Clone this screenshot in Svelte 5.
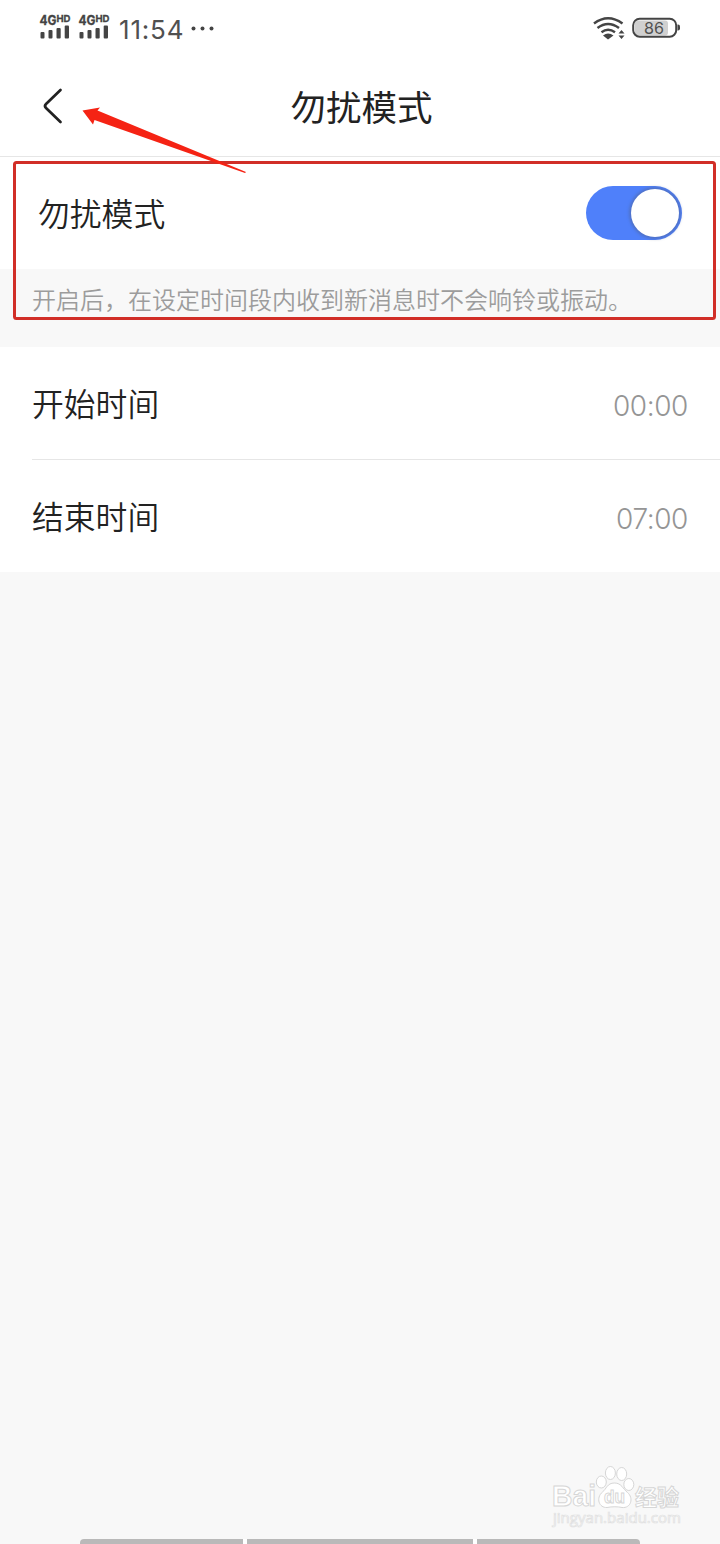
<script>
    let enabled = true;

    const signals = [1, 2];

    const times = [
        { label: '开始时间', value: '00:00' },
        { label: '结束时间', value: '07:00' }
    ];
</script>

<style>
    :global(body) {
        margin: 0;
        background: #f8f8f8;
    }

    .screen {
        position: relative;
        width: 720px;
        height: 1544px;
        overflow: hidden;
        background: #f8f8f8;
        color: #222;
        font-family: "Noto Sans CJK SC", sans-serif;
        font-weight: 350;
    }

    svg {
        display: block;
    }

    /* Status bar */
    .status {
        display: flex;
        justify-content: space-between;
        height: 56px;
        padding: 0 38px 0 39px;
        background: #fff;
    }

    .status-left, .status-right {
        display: flex;
    }

    .signal {
        margin-right: 7px;
    }

    .clock {
        margin-left: 2px;
        width: 64px;
        white-space: nowrap;
        font-family: Inter, sans-serif;
        font-size: 26px;
        font-weight: 400;
        line-height: 60px;
        letter-spacing: 0.8px;
        color: #505050;
    }

    .more {
        margin-left: 7px;
    }

    /* Title bar */
    .title-bar {
        display: grid;
        grid-template-columns: 100px 1fr 100px;
        align-items: center;
        height: 100px;
        background: #fff;
        border-bottom: 1px solid #e6e6e6;
    }

    .title-bar h1 {
        margin: 0 0 0 3px;
        font-size: 35.5px;
        font-weight: 400;
        line-height: 100px;
        text-align: center;
    }

    .back {
        padding: 0;
        border: none;
        background: none;
    }

    /* Settings rows */
    .row {
        display: flex;
        align-items: center;
        justify-content: space-between;
        box-sizing: border-box;
        height: 112px;
        padding: 0 32px;
        background: #fff;
        font-size: 31.8px;
    }

    .row.main {
        padding: 0 38px;
    }

    .label {
        padding-bottom: 2px;
    }

    .switch {
        display: flex;
        justify-content: flex-end;
        box-sizing: border-box;
        width: 96px;
        height: 54px;
        padding: 3px;
        border: none;
        border-radius: 27px;
        background: #4f80fa;
    }

    .switch.off {
        justify-content: flex-start;
        background: #ccc;
    }

    .knob {
        width: 48px;
        height: 48px;
        border-radius: 50%;
        background: #fff;
        box-shadow: 0 0 3px 2px rgba(80, 95, 135, 0.45);
    }

    .note {
        height: 78px;
        margin: 0;
        padding-left: 32px;
        font-size: 24px;
        line-height: 60px;
        color: #9c9c9c;
    }

    .times {
        background: #fff;
    }

    .time-row + .time-row {
        height: 113px;
        margin-left: 32px;
        padding-left: 0;
        border-top: 1px solid #e6e6e6;
    }

    .value {
        font-family: Inter, sans-serif;
        font-size: 28px;
        font-weight: 300;
        letter-spacing: -0.4px;
        color: #959595;
        padding-top: 5px;
    }

    /* Marks over the page */
    .marks, .watermark, .gestures {
        position: absolute;
    }

    .marks {
        left: 0;
        top: 0;
    }

    .watermark {
        left: 545px;
        top: 1460px;
    }

    .gestures {
        left: 80px;
        bottom: 0;
        display: grid;
        grid-template-columns: 163px 226px 163px;
        gap: 4px;
        background: #fff;
        border-radius: 4px 4px 0 0;
        overflow: hidden;
    }

    .gestures span {
        height: 5px;
        background: #b9b9b9;
    }
</style>

<div class="screen">
    <header class="status">
        <div class="status-left">
            {#each signals as signal (signal)}
                <svg class="signal" width="32" height="56" viewBox="0 0 32 56" fill="#444">
                    <g font-family="Inter, sans-serif" font-weight="700" stroke="#444" stroke-width="0.3">
                        <text x="0.5" y="24.5" font-size="13" textLength="17" lengthAdjust="spacingAndGlyphs">4G</text>
                        <text x="17.5" y="22" font-size="9.5" textLength="14" lengthAdjust="spacingAndGlyphs">HD</text>
                    </g>
                    <rect x="1.5" y="32" width="4" height="6.5" rx="1" />
                    <rect x="9.5" y="30" width="4" height="8.5" rx="1" />
                    <rect x="17.5" y="28" width="4.2" height="10.5" rx="1" />
                    <rect x="25.7" y="25.5" width="4.3" height="13" rx="1" />
                </svg>
            {/each}
            <div class="clock">11:54</div>
            <svg class="more" width="26" height="56" fill="#444">
                <circle cx="3.5" cy="28.5" r="2" />
                <circle cx="12.5" cy="28.5" r="2" />
                <circle cx="21.5" cy="28.5" r="2" />
            </svg>
        </div>
        <div class="status-right">
            <svg width="90" height="56" viewBox="592 0 90 56" fill="none" stroke="#444" stroke-width="2.5">
                <path d="M594 23.5Q608 13 622.5 23.5M597.5 28Q608 20 619 28M601.5 32.2Q608 27.5 615 32.2" />
                <path d="M603 35.5Q608 31.5 613.5 35.5L608 39.5Z" fill="#444" stroke="none" />
                <path d="M618.5 33.5L621.5 30L624.5 33.5ZM618.5 35.5L621.5 39L624.5 35.5Z" fill="#444" stroke="none" />
                <rect x="635" y="20.5" width="33" height="15" rx="3" fill="#d0d0d0" stroke="none" />
                <rect x="633.2" y="18.7" width="43" height="18" rx="6.5" stroke-width="2" />
                <path d="M677.5 24.5h.5q2 0 2 2v2q0 2-2 2h-.5z" fill="#444" stroke="none" />
                <text x="644" y="34" font-family="Inter, sans-serif" font-size="16.5" font-weight="400" fill="#505050" stroke="none" textLength="20" lengthAdjust="spacingAndGlyphs">86</text>
            </svg>
        </div>
    </header>

    <nav class="title-bar">
        <button class="back" aria-label="返回">
            <svg width="100" height="100" viewBox="0 56 100 100" fill="none" stroke="#222" stroke-width="2.7" stroke-linecap="round" stroke-linejoin="round">
                <path d="M60.5 90L46 104Q44 106 46 108L60.5 122" />
            </svg>
        </button>
        <h1>勿扰模式</h1>
    </nav>

    <div class="row main">
        <span class="label">勿扰模式</span>
        <button class="switch" class:off={!enabled} aria-label="勿扰模式" on:click={() => enabled = !enabled}>
            <span class="knob"></span>
        </button>
    </div>
    <p class="note">开启后，在设定时间段内收到新消息时不会响铃或振动。</p>

    <div class="times">
        {#each times as time}
            <div class="row time-row">
                <span class="label">{time.label}</span>
                <span class="value">{time.value}</span>
            </div>
        {/each}
    </div>

    <svg class="marks" width="720" height="330" pointer-events="none">
        <rect x="14.5" y="162.5" width="700" height="156" rx="2" fill="none" stroke="#d12e27" stroke-width="3" />
        <path d="M82.5 110.5L100 107.5L97.5 110.5L246 172L245 173L94.5 120L93 124.5Z" fill="#f52314" />
    </svg>

    <svg class="watermark" width="145" height="70" viewBox="545 1460 145 70" fill="#fff" stroke="#d6d6d6" stroke-width="1">
        <g font-family="Liberation Sans, sans-serif" font-weight="700">
            <text x="552" y="1506" font-size="29" textLength="44" lengthAdjust="spacingAndGlyphs">Bai</text>
            <ellipse cx="601.3" cy="1482" rx="5" ry="6" />
            <ellipse cx="610.4" cy="1473" rx="5" ry="6.5" />
            <ellipse cx="621.7" cy="1474" rx="5" ry="6.5" />
            <ellipse cx="628.8" cy="1484.5" rx="5" ry="6" />
            <path d="M614.5 1483C607 1483 606.5 1489 602.5 1492C595.5 1498 599 1508 607 1507.5C612 1506.5 618 1506.5 622 1507.5C631 1508.5 634 1498 627.5 1492.5C623 1489 621.5 1483 614.5 1483Z" />
            <text x="604" y="1503" font-size="19" textLength="21" lengthAdjust="spacingAndGlyphs">du</text>
        </g>
        <text x="635" y="1505" font-family="Noto Sans CJK SC, sans-serif" font-size="22" font-weight="700">经验</text>
        <text x="553" y="1523" font-family="Open Sans, sans-serif" font-size="14" font-weight="400" stroke="#e0e0e0" stroke-width="0.7" textLength="128" lengthAdjust="spacingAndGlyphs">jingyan.baidu.com</text>
    </svg>

    <div class="gestures">
        <span></span>
        <span></span>
        <span></span>
    </div>
</div>
